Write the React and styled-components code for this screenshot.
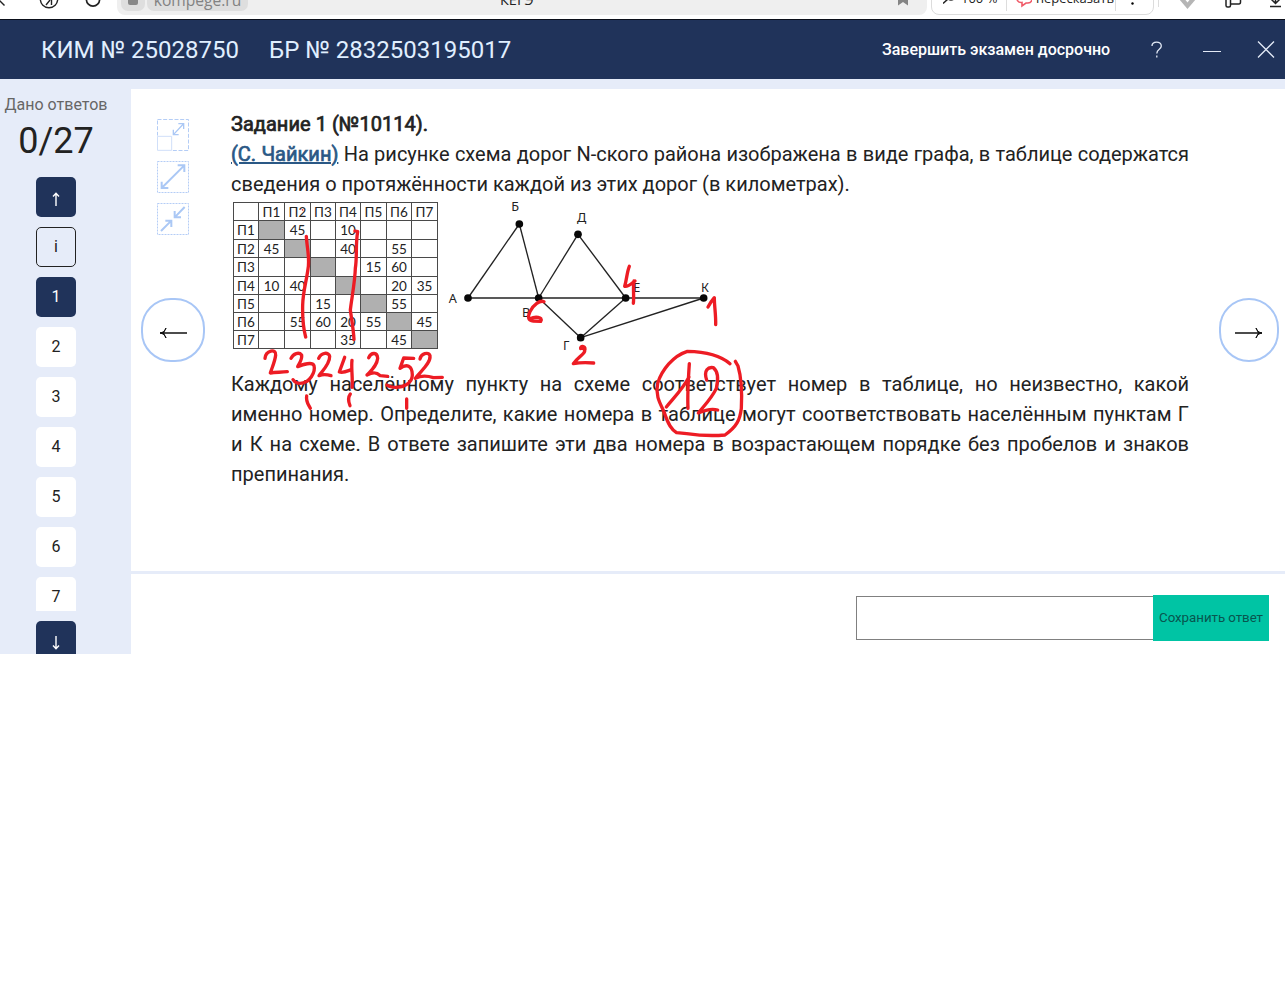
import React from "react";
import styled, { createGlobalStyle } from "styled-components";

const Global = createGlobalStyle`
  * { box-sizing: border-box; }
  body { margin: 0; background: #fff; color: #222; font-family: Roboto, "Noto Sans", sans-serif; }
  svg { display: block; flex: none; }
`;

const Page = styled.div`
  position: relative;
  width: 1285px;
  height: 1000px;
  overflow: hidden;
  background: #fff;
`;

/* Browser strip */
const BrowserBar = styled.div`
  display: flex;
  align-items: flex-end;
  height: 20px;
  overflow: hidden;
  border-bottom: 1px solid #0b0f1a;
  font-family: "Open Sans", "Noto Sans", sans-serif;
`;
const NavIcons = styled.div`
  width: 117px;
  height: 19px;
`;
const AddressBar = styled.div`
  display: flex;
  align-items: flex-end;
  width: 810px;
  height: 40px;
  margin-bottom: 4px;
  padding: 0 18px 4px 4px;
  border-radius: 0 0 8px 8px;
  background: #efefef;
`;
const Chip = styled.div`
  display: flex;
  align-items: flex-end;
  justify-content: center;
  width: ${(p) => p.$w}px;
  height: 30px;
  margin-right: 2px;
  padding-bottom: ${(p) => p.$pb || 0}px;
  border-radius: 7px;
  background: #dedede;
  color: #828282;
  font-size: 15.6px;
  line-height: 22px;
`;
const LockBlock = styled.span`
  width: 10px;
  height: 12px;
  border-radius: 2px;
  background: #888;
`;
const TabTitle = styled.div`
  flex: 1;
  padding-left: 250px;
  color: #222;
  font-size: 14.5px;
  line-height: 20px;
  margin-bottom: 1.5px;
`;
const Tools = styled.div`
  display: flex;
  align-items: flex-end;
  width: 223px;
  height: 40px;
  margin: 0 0 4px 4px;
  padding: 0 9px 3px 11px;
  border: 1px solid #dcdcdc;
  border-radius: 8px;
  line-height: 18px;
`;
const ToolText = styled.span`
  width: ${(p) => p.$w}px;
  margin-left: ${(p) => p.$ml}px;
  font-size: ${(p) => p.$size}px;
  white-space: nowrap;
  margin-bottom: 4px;
`;
const ExtIcons = styled.div`
  flex: 1;
  height: 19px;
`;

/* Exam header */
const Header = styled.header`
  display: flex;
  align-items: center;
  height: 59px;
  padding: 0 10px 0 41px;
  background: #20335a;
`;
const Ident = styled.span`
  width: ${(p) => p.$w}px;
  margin-right: 30px;
  color: #e0efff;
  font-size: 24px;
  line-height: 30px;
  white-space: nowrap;
`;
const Finish = styled.span`
  width: 227px;
  margin-left: auto;
  margin-right: 39px;
  color: #fff;
  font-size: 16px;
  font-weight: 500;
  white-space: nowrap;
`;

/* Body */
const Workspace = styled.div`
  display: flex;
  height: 575px;
  background: #e6ecf9;
  overflow: hidden;
`;
const Sidebar = styled.aside`
  display: flex;
  flex-direction: column;
  align-items: center;
  width: 131px;
  padding: 16px 19px 0 0;
`;
const Caption = styled.div`
  color: #666;
  font-size: 16px;
  line-height: 20px;
  white-space: nowrap;
`;
const Counter = styled.div`
  margin-top: 5px;
  font-size: 36px;
  line-height: 42px;
`;
const Strip = styled.div`
  display: flex;
  flex: none;
  flex-direction: column;
  gap: 10px;
  height: 434px;
  margin-top: 15px;
  overflow: hidden;
`;
const Square = styled.div`
  display: flex;
  flex: none;
  align-items: center;
  justify-content: center;
  width: 40px;
  height: 40px;
  margin-top: ${(p) => p.$mt || 0}px;
  border-radius: 5px;
  border: ${(p) => (p.$outline ? "1px solid #222" : "0")};
  background: ${(p) => (p.$dark ? "#20335a" : p.$outline ? "transparent" : "#fff")};
  color: ${(p) => (p.$dark ? "#fff" : "#222")};
  font-size: 16px;
  line-height: 20px;
`;
const Main = styled.main`
  flex: 1;
  padding-top: 10px;
`;
const Task = styled.section`
  display: flex;
  height: 482px;
  background: #fff;
`;
const LeftRail = styled.div`
  width: 100px;
  padding: 30px 0 0 10px;
`;
const IconStack = styled.div`
  display: flex;
  flex-direction: column;
  gap: 10px;
  padding-left: 16px;
`;
const RightRail = styled.div`
  width: 96px;
  padding: 209px 0 0 30px;
`;
const Round = styled.div`
  display: flex;
  align-items: center;
  justify-content: center;
  width: ${(p) => p.$w}px;
  height: 64px;
  margin-top: ${(p) => p.$mt || 0}px;
  padding-top: 6px;
  border: 2px solid #a8c6f6;
  border-radius: 30px;
`;
const Content = styled.article`
  width: 958px;
  padding-top: 20px;
  font-size: 20px;
  line-height: 30px;
`;
const Title = styled.div`
  font-weight: 400;
  -webkit-text-stroke: 0.7px #222;
  letter-spacing: 0.04px;
`;
const Line = styled.div`
  white-space: nowrap;
  text-align: justify;
  text-align-last: ${(p) => (p.$last ? "left" : "justify")};
`;
const Author = styled.a`
  color: #2a5885;
  font-weight: 400;
  -webkit-text-stroke: 0.7px #2a5885;
  text-decoration: underline;
`;
const Figure = styled.div`
  display: flex;
  align-items: flex-start;
  height: 170px;
`;
const Matrix = styled.div`
  display: grid;
  grid-template-columns: 24px 25px 25px 24px 24px 25px 24px 25px;
  grid-template-rows: 17px 18px 17px 18px 17px 17px 17px 17px;
  gap: 1px;
  margin: 3px 2px 0;
  padding: 1px;
  background: #4a4a4a;
  font-family: Lato, "Noto Sans", sans-serif;
  font-size: 13.5px;
`;
const Cell = styled.div`
  display: flex;
  align-items: center;
  justify-content: center;
  padding-top: 1px;
  background: ${(p) => (p.$shade ? "#b0b0b0" : "#fff")};
  color: #222;
  line-height: 17px;
`;
const Footer = styled.footer`
  display: flex;
  align-items: center;
  justify-content: flex-end;
  height: 80px;
  margin-top: 3px;
  padding: 8px 16px 0 0;
  background: #fff;
`;
const Answer = styled.input`
  width: 298px;
  height: 44px;
  margin: 0 -1px 0 0;
  border: 1px solid #808080;
  border-radius: 0;
  background: #fff;
`;
const Save = styled.button`
  position: relative;
  width: 116px;
  height: 46px;
  padding: 0 0 2px;
  border: 0;
  background: #00c4a4;
  color: #08564f;
  font-family: Roboto, sans-serif;
  font-size: 13.33px;
  letter-spacing: -0.05px;
  white-space: nowrap;
`;
const Ink = styled.svg`
  position: absolute;
  inset: 0;
  pointer-events: none;
`;

const heads = ["П1", "П2", "П3", "П4", "П5", "П6", "П7"];
const values = [
  ["", "45", "", "10", "", "", ""],
  ["45", "", "", "40", "", "55", ""],
  ["", "", "", "", "15", "60", ""],
  ["10", "40", "", "", "", "20", "35"],
  ["", "", "15", "", "", "55", ""],
  ["", "55", "60", "20", "55", "", "45"],
  ["", "", "", "35", "", "45", ""],
];

const RoadTable = () => (
  <Matrix>
    <Cell />
    {heads.map((h) => <Cell key={h}>{h}</Cell>)}
    {values.map((row, r) => (
      <React.Fragment key={r}>
        <Cell>{heads[r]}</Cell>
        {row.map((v, c) => <Cell key={c} $shade={r === c}>{v}</Cell>)}
      </React.Fragment>
    ))}
  </Matrix>
);

const nodes = { A: [84, 309], B: [238, 87], V: [296, 309], D: [414, 118], G: [422, 428], E: [557, 309], K: [791, 309] };
const edges = ["AB", "BV", "AV", "VD", "DE", "VE", "VG", "GE", "EK", "GK"];
const labels = [["А", 26, 325], ["Б", 214, 49], ["В", 246, 365], ["Д", 411, 80], ["Г", 369, 466], ["Е", 580, 290], ["К", 783, 291]];

const RoadGraph = () => (
  <svg width="310" height="165" viewBox="0 12 930 495">
    {edges.map((e) => {
      const [a, b] = [nodes[e[0]], nodes[e[1]]];
      return <line key={e} x1={a[0]} y1={a[1]} x2={b[0]} y2={b[1]} stroke="#222" strokeWidth="4" />;
    })}
    {Object.entries(nodes).map(([k, [x, y]]) => <circle key={k} cx={x} cy={y} r="11.5" fill="#080808" />)}
    {labels.map(([t, x, y]) => (
      <text key={t} x={x} y={y} fontSize="38" fontFamily="Noto Sans, sans-serif" fill="#222">{t}</text>
    ))}
  </svg>
);

const ToolIcon = ({ kind }) => (
  <svg width="32" height="32" viewBox="0 0 96 96" fill="none" stroke="#abc8f5" strokeWidth="5">
    <rect x="1.5" y="1.5" width="93" height="93" strokeWidth="3" strokeDasharray={kind === "window" ? "12 5" : "6 3"} stroke="#b4cdf6" />
    {kind === "window" && (
      <>
        <rect x="0" y="50" width="46" height="46" fill="#fff" stroke="none" />
        <path d="M1.5 52H44V94H1.5Z" stroke="#d0dff9" strokeWidth="3" />
        <path d="M50 46L79 15M64 14H80V30M49 32V47H65" strokeWidth="4" />
      </>
    )}
    {kind === "expand" && <path d="M14 81L82 13M62 13H82V33M14 62V81H34" strokeWidth="6" />}
    {kind === "collapse" && <path d="M12 84L43 53M25 53H43V72M83 12L53 43M53 24V43H72" strokeWidth="6" />}
  </svg>
);

const SmallArrow = ({ down }) => (
  <svg width="8" height="14" viewBox="0 0 8 14" fill="none" stroke="#fff" strokeWidth="1.4"
    transform={down ? "translate(0 2) rotate(180)" : "translate(0 2)"}>
    <path d="M4 14V1.5M1 4.5L4 1.3L7 4.5" />
  </svg>
);

const LongArrow = ({ back }) => (
  <svg width="28" height="12" viewBox="0 0 28 12" fill="none" stroke="#111" strokeWidth="1.5"
    transform={back ? "rotate(180)" : undefined}>
    <path d="M0 6H27" />
    <path d="M21 1C22 4 24 5.500 27 6C24 6.500 22 8 21 11L23.500 6Z" fill="#111" strokeWidth="1" />
  </svg>
);

export default function App() {
  return (
    <>
      <Global />
      <Page>
        <BrowserBar>
          <NavIcons>
            <svg width="117" height="19" fill="none" stroke="#222" strokeWidth="1.4">
              <path d="M-4 -3L4.5 5.5" />
              <circle cx="49" cy="-1" r="8.7" />
              <path d="M51.500 -6V5M46 5L50 0" />
              <circle cx="93" cy="-.5" r="6.600" strokeWidth="1.700" />
            </svg>
          </NavIcons>
          <AddressBar>
            <Chip $w={24} $pb={6}><LockBlock /></Chip>
            <Chip $w={101}>kompege.ru</Chip>
            <TabTitle>КЕГЭ</TabTitle>
            <svg width="12" height="20" viewBox="0 0 12 20"><path d="M1 0H11V14.500L6 11L1 14.500Z" fill="#858585" /></svg>
          </AddressBar>
          <Tools>
            <svg width="13" height="20" fill="none" stroke="#222" strokeWidth="1.500"><circle cx="8" cy="4.500" r="4.500" /><path d="M5 8L0 12.500" /></svg>
            <ToolText $w={37} $ml={5} $size={13}>100 %</ToolText>
            <svg width="34" height="20" fill="none" stroke="#f05a68" strokeWidth="1.600">
              <path d="M8.500 0V20" stroke="#ddd" strokeWidth="1" />
              <path d="M19.500 4C18 9 20 12 24 11.500V15L28 12H30C34 12 35 8 33 4" />
              <path d="M24 5V8.500M29 5V8.500" strokeWidth="2.500" />
            </svg>
            <ToolText $w={74} $ml={4} $size={13}>пересказать</ToolText>
            <svg width="30" height="20"><path d="M5.500 0V20" stroke="#ddd" /><circle cx="22.500" cy="7" r="1.200" /><circle cx="22.500" cy="12.500" r="1.200" /></svg>
          </Tools>
          <ExtIcons>
            <svg width="131" height="19" fill="none" stroke="#222" strokeWidth="1.500">
              <path d="M4.500 0V7" stroke="#ddd" strokeWidth="1" />
              <path d="M25 -1L33.500 9L42 -1Z" fill="#b5b5b5" stroke="none" />
              <path d="M31.500 0L33.500 2.500L35.500 0Z" fill="#fff" stroke="none" />
              <path d="M72 -2V5.500Q72 7 73.500 7H75Q76.500 7 76.500 5.500V-2M76.500 4H85Q86.500 4 86.500 2V-2" />
              <path d="M116 6.500H127M121.500 -3V3M117.500 -.500L121.500 3.500L125.500 -.500" />
            </svg>
          </ExtIcons>
        </BrowserBar>

        <Header>
          <Ident $w={198}>КИМ № 25028750</Ident>
          <Ident $w={242}>БР № 2832503195017</Ident>
          <Finish>Завершить экзамен досрочно</Finish>
          <svg width="127" height="20" fill="none" stroke="#e3eaf6" strokeWidth="1.300">
            <path d="M4 6C4 .8 13.300 .8 13.300 6C13.300 9.500 8.800 9 8.800 13.500M8.800 15.500V17.500" />
            <path d="M55 11.500H73" strokeWidth="1" />
            <path d="M110 1.500L126 17.500M126 1.500L110 17.500" />
          </svg>
        </Header>

        <Workspace>
          <Sidebar>
            <Caption>Дано ответов</Caption>
            <Counter>0/27</Counter>
            <Strip>
              <Square $dark><SmallArrow /></Square>
              <Square $outline>i</Square>
              <Square $dark>1</Square>
              {[2, 3, 4, 5, 6, 7].map((n) => <Square key={n}>{n}</Square>)}
            </Strip>
            <Square $dark $mt={10}><SmallArrow down /></Square>
          </Sidebar>
          <Main>
            <Task>
              <LeftRail>
                <IconStack>
                  <ToolIcon kind="window" />
                  <ToolIcon kind="expand" />
                  <ToolIcon kind="collapse" />
                </IconStack>
                <Round $w={64} $mt={63}><LongArrow back /></Round>
              </LeftRail>
              <Content>
                <Title>Задание 1 (№10114).</Title>
                <Line><Author>(С. Чайкин)</Author> На рисунке схема дорог N-ского района изображена в виде графа, в таблице содержатся</Line>
                <Line $last>сведения о протяжённости каждой из этих дорог (в километрах).</Line>
                <Figure>
                  <RoadTable />
                  <RoadGraph />
                </Figure>
                <Line>Каждому населённому пункту на схеме соответствует номер в таблице, но неизвестно, какой</Line>
                <Line>именно номер. Определите, какие номера в таблице могут соответствовать населённым пунктам Г</Line>
                <Line>и К на схеме. В ответе запишите эти два номера в возрастающем порядке без пробелов и знаков</Line>
                <Line $last>препинания.</Line>
              </Content>
              <RightRail>
                <Round $w={60}><LongArrow /></Round>
              </RightRail>
            </Task>
            <Footer>
              <Answer aria-label="answer" />
              <Save>Сохранить ответ</Save>
            </Footer>
          </Main>
        </Workspace>

        <Ink width="1285" height="1000" fill="none" stroke="#ed1c24" strokeWidth="10" strokeLinecap="round" strokeLinejoin="round">
          <g transform="translate(225 195) scale(.33333)">
            <path d="M244 124C246 160 255 190 249 222C244 260 234 290 233 330C232 370 235 400 242 426" />
            <path d="M390 108L398 110C391 150 397 180 391 220C390 260 380 310 376 345C380 375 385 400 387 433" />
            <path d="M120 490C122 465 155 460 152 480C150 500 140 520 136 534C150 532 165 532 187 530" />
            <path d="M198 490C205 475 222 470 230 480C232 495 222 505 218 515C235 508 262 500 267 512C272 530 255 565 225 565C215 565 208 560 204 554" />
            <path d="M281 490C288 472 312 470 314 484C315 505 295 525 282 542C292 538 305 538 318 542" />
            <path d="M359 487L343 531C355 535 368 528 379 524M381 496C378 520 384 550 381 577" />
            <path d="M431 488C440 470 457 472 458 490C456 512 440 525 426 540C445 530 455 532 466 542L488 544" />
            <path d="M566 490L536 489L525 520C545 505 562 512 562 540C562 565 535 578 510 577C498 576 490 575 486 570" />
            <path d="M585 492C588 475 610 470 615 482C618 505 585 530 571 550C590 540 610 543 625 548L652 547" />
            <path d="M245 603C242 620 250 628 256 640M376 597C370 605 370 620 375 632M545 612V640" />
            <path d="M232 44L233 45" strokeWidth="4" />
          </g>
          <g transform="translate(440 195) scale(.33333)">
            <path d="M312 320C300 315 280 328 270 350C262 368 265 376 280 378L302 379C310 365 285 364 270 371" />
            <path d="M568 214C561 230 560 255 554 274C564 277 575 265 585 258M582 258C578 280 583 305 580 325" />
            <path d="M804 336C810 325 817 315 823 308C823 335 828 360 827 389" />
            <path d="M424 458L432 462C442 473 415 485 400 506C420 502 440 502 461 504M422 461C420 452 436 452 435 463" />
            <path d="M870 506C840 480 790 470 742 469C700 482 665 525 653 565C645 600 660 625 672 650C685 690 695 705 710 713L740 716C775 721 820 723 855 720C890 695 900 675 904 640C906 600 905 550 894 513L886 499" />
            <path d="M748 506C745 550 742 600 744 640M747 546C730 580 700 610 679 636" />
            <path d="M800 555C790 525 805 515 820 518C835 530 835 555 829 580C815 610 790 635 775 654C795 645 815 640 833 645" />
          </g>
        </Ink>
      </Page>
    </>
  );
}
